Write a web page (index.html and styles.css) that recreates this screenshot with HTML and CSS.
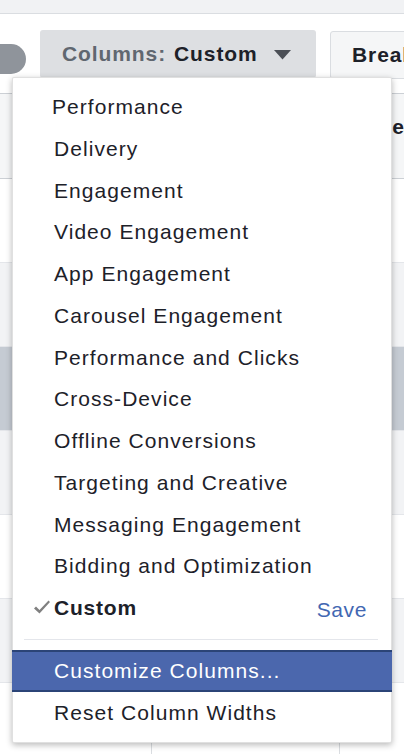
FILE: index.html
```html
<!DOCTYPE html>
<html>
<head>
<meta charset="utf-8">
<link rel="stylesheet" href="styles.css">
</head>
<body>
<div class="page">
  <div class="topbar"></div>
  <div class="toolbar">
    <div class="toggle"></div>
    <div class="colbtn">
      <span class="lbl">Columns:</span><span class="val">Custom</span>
      <svg class="caret" width="17" height="10" viewBox="0 0 17 10"><path d="M0 0 H17 L8.5 9.5 Z" fill="#4b4f56"/></svg>
    </div>
    <div class="breakbtn">Breakdown</div>
  </div>
  <div class="table">
    <div class="row head"><div class="c1"></div><div class="c2"></div><div class="c3">Reach</div></div>
    <div class="row"><div class="c1"></div><div class="c2"></div><div class="c3"></div></div>
    <div class="row light"><div class="c1"></div><div class="c2"></div><div class="c3"></div></div>
    <div class="row sel"><div class="c1"></div><div class="c2"></div><div class="c3"></div></div>
    <div class="row light"><div class="c1"></div><div class="c2"></div><div class="c3"></div></div>
    <div class="row"><div class="c1"></div><div class="c2"></div><div class="c3"></div></div>
    <div class="row light"><div class="c1"></div><div class="c2"></div><div class="c3"></div></div>
    <div class="row"><div class="c1"></div><div class="c2"></div><div class="c3"></div></div>
  </div>

  <div class="menu">
    <div class="item first">Performance</div>
    <div class="item">Delivery</div>
    <div class="item">Engagement</div>
    <div class="item">Video Engagement</div>
    <div class="item">App Engagement</div>
    <div class="item">Carousel Engagement</div>
    <div class="item">Performance and Clicks</div>
    <div class="item">Cross-Device</div>
    <div class="item">Offline Conversions</div>
    <div class="item">Targeting and Creative</div>
    <div class="item">Messaging Engagement</div>
    <div class="item">Bidding and Optimization</div>
    <div class="item custom">
      <svg class="check" width="18" height="16" viewBox="0 0 18 16"><path d="M1 9.5 L3 7.5 L6.5 11 L15.5 1.5 L17 3 L6.5 14.5 Z" fill="#808080"/></svg>
      <span class="cname">Custom</span>
      <span class="save">Save</span>
    </div>
    <div class="sep"></div>
    <div class="item active">Customize Columns...</div>
    <div class="item">Reset Column Widths</div>
  </div>
</div>
</body>
</html>
```
FILE: styles.css
```css
* { box-sizing: border-box; }
html, body { margin: 0; padding: 0; }
body {
  width: 404px;
  height: 754px;
  overflow: hidden;
  background: #fff;
  font-family: "Liberation Sans", Arial, sans-serif;
  color: #1d2129;
}
.page { position: relative; width: 404px; height: 754px; overflow: hidden; }

.topbar {
  height: 14px;
  background: #f1f2f4;
  border-bottom: 1px solid #dadde1;
}
.toolbar {
  height: 79px;
  display: flex;
  align-items: center;
  padding-top: 4px;
  white-space: nowrap;
}
.toggle {
  flex: none;
  width: 46px;
  height: 30px;
  border-radius: 15px;
  background: #8f949b;
  margin-left: -20px;
  margin-right: 14px;
  margin-top: 6px;
}
.colbtn {
  flex: none;
  width: 276px;
  height: 48px;
  margin-top: -4px;
  background: #dddfe2;
  border-radius: 3px;
  display: flex;
  align-items: center;
  padding-left: 22px;
  font-size: 21px;
  font-weight: bold;
  letter-spacing: 0.9px;
}
.colbtn .lbl { color: #606770; margin-right: 8px; }
.colbtn .val { color: #1d2129; }
.colbtn .caret { margin-left: 16px; margin-top: 2px; }
.breakbtn {
  flex: none;
  margin-left: 14px;
  margin-top: -2px;
  height: 48px;
  width: 120px;
  border: 1px solid #dadde1;
  border-radius: 3px;
  background: #f5f6f7;
  font-size: 21px;
  font-weight: bold;
  letter-spacing: 0.9px;
  padding-left: 21px;
  line-height: 46px;
  overflow: hidden;
}

.table { display: flex; flex-direction: column; }
.row {
  height: 84px;
  display: flex;
  border-bottom: 1px solid #e4e6ea;
  background: #fff;
}
.row.head {
  height: 86px;
  border-top: 1px solid #ccd0d5;
  border-bottom: 1px solid #ccd0d5;
  background: #f5f6f7;
}
.row.light { background: #f2f3f5; }
.row.sel { background: #c5cbd3; }
.c1 { width: 152px; border-right: 1px solid #dadde1; }
.c2 { width: 188px; border-right: 1px solid #dadde1; }
.c3 {
  flex: 1;
  padding-left: 37px;
  font-size: 21px;
  font-weight: bold;
  line-height: 66px;
  white-space: nowrap;
  overflow: hidden;
}

.menu {
  position: absolute;
  left: 12px;
  top: 77px;
  width: 380px;
  height: 666px;
  background: #fff;
  border: 1px solid rgba(0,0,0,0.12);
  border-radius: 2px;
  box-shadow: 0 2px 6px rgba(0,0,0,0.28);
  padding-top: 8px;
  padding-bottom: 8px;
  display: flex;
  flex-direction: column;
}
.item {
  height: 41.75px;
  line-height: 41.75px;
  padding-left: 41px;
  font-size: 21px;
  letter-spacing: 1.05px;
  color: #1d2129;
  white-space: nowrap;
  display: flex;
  align-items: center;
}
.item.first { padding-left: 39px; }
.item.custom { position: relative; padding-right: 24px; }
.check { position: absolute; left: 20px; top: 12px; }
.cname { font-weight: bold; letter-spacing: 0.8px; }
.save { margin-left: auto; color: #4267b2; letter-spacing: 0.6px; margin-top: 4px; }
.sep {
  height: 1px;
  background: #e4e6eb;
  margin: 10px 13px 11px 11px;
}
.item.active {
  height: 42px;
  background: #4b67ad;
  border-top: 2px solid #2b4477;
  border-bottom: 2px solid #2b4477;
  color: #fff;
  margin: 0 -1px;
  padding-left: 42px;
}
```
